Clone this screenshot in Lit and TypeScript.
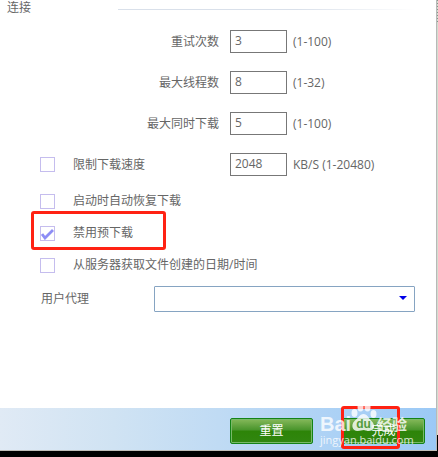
import { LitElement, html, css } from "lit";
import { customElement } from "lit/decorators.js";

const limits = [
  { id: "retry", label: "重试次数", value: "3", range: "(1-100)" },
  { id: "threads", label: "最大线程数", value: "8", range: "(1-32)" },
  { id: "parallel", label: "最大同时下载", value: "5", range: "(1-100)" },
];

const options = [
  { id: "resume", label: "启动时自动恢复下载", checked: false },
  { id: "prefetch", label: "禁用预下载", checked: true },
  { id: "filetime", label: "从服务器获取文件创建的日期/时间", checked: false },
];

@customElement("app-root")
export class AppRoot extends LitElement {
  static styles = css`
    * { box-sizing: border-box; }
    :host {
      display: flex;
      flex-direction: column;
      min-height: 100vh;
      background: #000;
      color: #666;
      font: 12px/16px "Open Sans", "Noto Sans CJK SC", sans-serif;
    }
    .frame {
      flex: 1;
      display: flex;
      margin-bottom: 6px;
    }
    .window {
      flex: 1;
      min-width: 0;
      display: flex;
      flex-direction: column;
      background: #fff;
      border-right: 1px solid #b8b8b8;
      border-bottom: 1px solid #c0bdb8;
    }
    .edge {
      width: 1px;
      margin-bottom: 16px;
      background: #d3ddcf;
    }
    .marks {
      height: 24px;
      background: repeating-linear-gradient(#8a938c 0 1px, #d3ddcf 1px 3px);
    }
    .form { flex: 1; margin: 0; }
    .title {
      display: flex;
      align-items: center;
      gap: 87px;
      height: 16px;
      margin: 0 21px 5px 7px;
      font-size: 12px;
      font-weight: normal;
    }
    .rule {
      flex: 1;
      height: 1px;
      margin-top: 3px;
      background: linear-gradient(90deg, #d9e0ea 60%, #fff);
    }
    .row {
      position: relative;
      display: grid;
      align-items: center;
      grid-template-columns: 219px 57px 1fr;
      height: 41px;
      column-gap: 11px;
    }
    .name { text-align: right; }
    .unit { margin-left: -5px; }
    .number {
      width: 57px;
      height: 23px;
      padding: 0 4px 2px;
      border: 1px solid #777;
      border-radius: 0;
      background: #fff;
      color: #666;
      font: inherit;
      outline: none;
    }
    .check {
      display: flex;
      align-items: center;
      gap: 18px;
      padding-left: 40px;
    }
    .option {
      position: relative;
      display: flex;
      align-items: center;
      height: 32px;
    }
    .box {
      appearance: none;
      width: 15px;
      height: 15px;
      margin: 0;
      border: 1px solid #c5bdee;
      background: #fff;
    }
    .box:checked {
      background: #fff url("data:image/svg+xml,%3Csvg xmlns='http://www.w3.org/2000/svg' viewBox='0 0 13 13'%3E%3Cpath d='M1 7l3 4 8-8' fill='none' stroke='%238d8df5' stroke-width='2.8'/%3E%3C/svg%3E");
    }
    .mark {
      position: absolute;
      border: 3px solid #ff2213;
      border-radius: 3px;
      pointer-events: none;
    }
    .mark-option { left: 31px; top: -6px; bottom: -1px; width: 135px; }
    .mark-button { left: -1px; top: -12px; width: 59px; height: 43px; }
    .agent {
      display: grid;
      grid-template-columns: 103px 1fr;
      gap: 10px;
      align-items: center;
      height: 34px;
      margin-top: 1px;
      padding: 0 21px 0 41px;
    }
    .pick { position: relative; display: flex; }
    .select {
      appearance: none;
      width: 100%;
      height: 26px;
      border: 1px solid #86a4c2;
      border-radius: 1px;
      background: #fff;
      color: #666;
      font: inherit;
    }
    .arrow {
      position: absolute;
      right: 8px;
      top: 10px;
      width: 8px;
      height: 4px;
      background: #0000e8;
      clip-path: polygon(0 0, 100% 0, 50% 100%);
      pointer-events: none;
    }
    .footer {
      display: flex;
      justify-content: flex-end;
      gap: 29px;
      padding: 10px 11px 6px;
      background: linear-gradient(90deg, #e0eaf5, #d0e3f3 26%, #c0dbf4 50%, #9bc9f6);
    }
    .action { position: relative; display: flex; }
    .button {
      width: 83px;
      height: 26px;
      padding: 0;
      border: 1px solid #148317;
      border-radius: 2px;
      box-shadow: inset 0 0 0 1px #79b968;
      background: linear-gradient(#86b95b, #48942b 46%, #2d8408 50%, #318610);
      color: #fff;
      font: inherit;
    }
    .brand {
      position: absolute;
      left: -22px;
      top: -16px;
      width: 92px;
      color: #fff;
      opacity: 0.8;
      pointer-events: none;
    }
    .logo { display: flex; align-items: flex-end; height: 32px; }
    .bai {
      width: 30px;
      font: bold 20px/20px "Liberation Sans", sans-serif;
    }
    .paw { width: 27px; height: 30px; margin-bottom: 2px; }
    .jingyan { font: bold 15px/20px "Noto Sans CJK SC", sans-serif; }
    .site { display: block; font: 11px/12px "Open Sans", sans-serif; white-space: nowrap; }
  `;

  render() {
    return html`
      <div class="frame">
        <main class="window">
          <form class="form">
            <h2 class="title">连接<span class="rule"></span></h2>
            ${limits.map((l) => html`
              <div class="row">
                <label class="name" for=${l.id}>${l.label}</label>
                <input class="number" id=${l.id} type="text" .value=${l.value} />
                <span class="unit">${l.range}</span>
              </div>`)}
            <div class="row">
              <label class="check"><input class="box" type="checkbox" />限制下载速度</label>
              <input class="number" type="text" aria-label="限制下载速度 KB/S" .value=${"2048"} />
              <span class="unit">KB/S (1-20480)</span>
            </div>
            ${options.map((o) => html`
              <div class="option">
                <label class="check"><input class="box" id=${o.id} type="checkbox" .checked=${o.checked} />${o.label}</label>
                ${o.checked ? html`<span class="mark mark-option"></span>` : null}
              </div>`)}
            <div class="agent">
              <label for="agent">用户代理</label>
              <span class="pick">
                <select class="select" id="agent"><option></option></select>
                <span class="arrow"></span>
              </span>
            </div>
          </form>
          <footer class="footer">
            <div class="action"><button class="button" type="button">重置</button></div>
            <div class="action">
              <button class="button" type="button">完成</button>
              <span class="mark mark-button"></span>
              <div class="brand">
                <div class="logo">
                  <span class="bai">Bai</span>
                  <svg class="paw" viewBox="0 0 26 30" fill="#fff">
                    <ellipse cx="10" cy="5" rx="3" ry="4.5" />
                    <ellipse cx="17" cy="5" rx="3" ry="4.5" />
                    <ellipse cx="4" cy="11" rx="3" ry="4" />
                    <ellipse cx="23" cy="12" rx="3" ry="4" />
                    <path d="M13 12c4 0 5 4 8 7 5 5 2 10-3 10-3 0-3-1-5-1s-3 1-6 1c-5 0-7-6-3-10 4-3 5-7 9-7z" />
                    <text x="13" y="26" text-anchor="middle" font-family="Liberation Sans" font-size="12" font-weight="bold" fill="#4e9a3a">du</text>
                  </svg>
                  <span class="jingyan">经验</span>
                </div>
                <span class="site">jingyan.baidu.com</span>
              </div>
            </div>
          </footer>
        </main>
        <div class="edge"><div class="marks"></div></div>
      </div>
    `;
  }
}
